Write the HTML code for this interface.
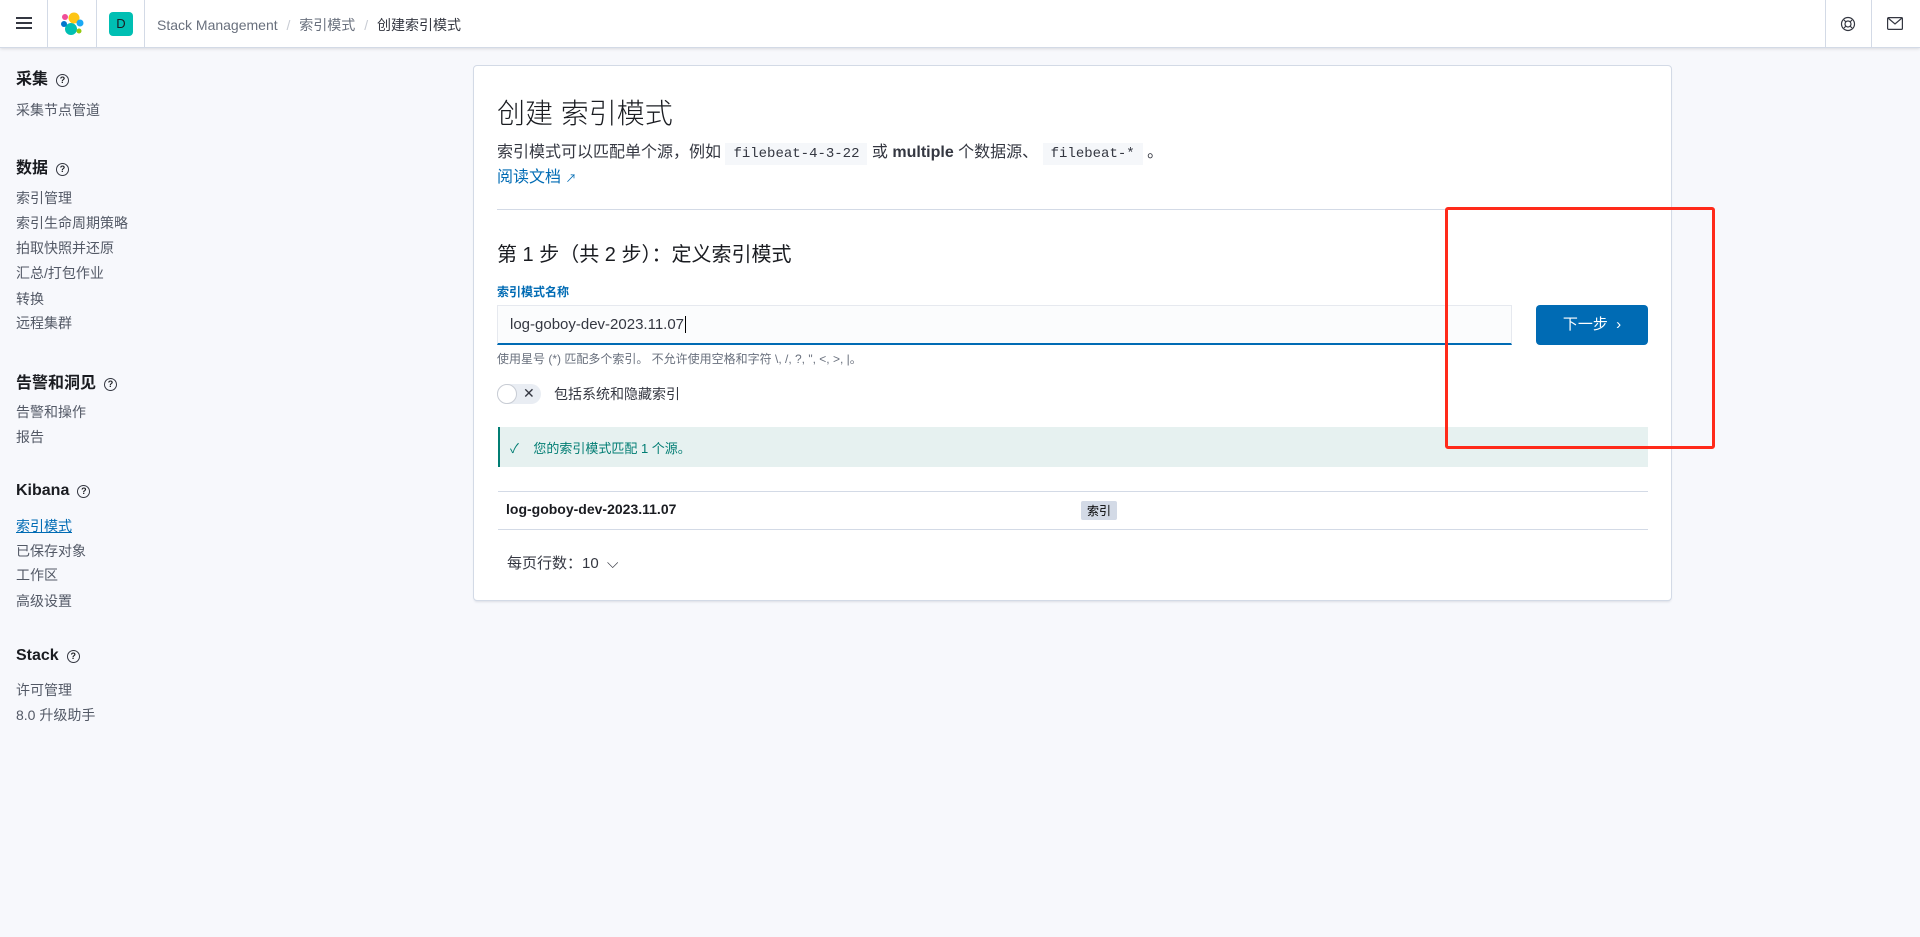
<!DOCTYPE html>
<html><head><meta charset="utf-8"><style>
*{box-sizing:border-box;margin:0;padding:0}
body{width:1920px;height:937px;background:#f7f8fc;font-family:"Liberation Sans","Noto Sans CJK SC",sans-serif;color:#343741;position:relative;overflow:hidden}
.hdr{position:absolute;left:0;top:0;width:1920px;height:48px;background:#fff;border-bottom:1px solid #d3dae6;box-shadow:0 1px 3px rgba(0,0,0,.12)}
.vd{position:absolute;top:0;width:1px;height:48px;background:#d3dae6}
.abs{position:absolute}
.sb h3{position:absolute;left:16px;font-size:16px;font-weight:bold;color:#1a1c21}
.sb h3 span{display:inline-block;width:13px;height:13px;border:1.5px solid #343741;border-radius:50%;font-size:9px;text-align:center;line-height:10px;margin-left:8px;vertical-align:1px;font-weight:bold}
.sb a{position:absolute;left:16px;font-size:14px;color:#535966;text-decoration:none}
.card{position:absolute;left:473px;top:65px;width:1199px;height:536px;background:#fff;border:1px solid #d3dae6;border-radius:4px;box-shadow:0 2px 2px -1px rgba(152,162,179,.3)}
code{font-family:"Liberation Mono",monospace;background:#f5f7fa;padding:3px 8px;font-size:14px;color:#343741}
</style></head><body>
<div class="hdr">
 <div class="abs" style="left:16px;top:17px;width:16px;height:2px;background:#343741;box-shadow:0 5px 0 #343741,0 10px 0 #343741"></div>
 <div class="vd" style="left:47px"></div>
 <svg class="abs" style="left:60px;top:12px" width="24" height="24" viewBox="0 0 24 24"><circle cx="14" cy="6" r="5.5" fill="#fec514"/><circle cx="5" cy="5" r="3" fill="#f04e98"/><circle cx="11" cy="17" r="6" fill="#00bfb3"/><circle cx="20" cy="11" r="3.5" fill="#1ba9f5"/><circle cx="19" cy="19" r="2.5" fill="#93c90e"/><circle cx="4" cy="12" r="3" fill="#0077cc"/></svg>
 <div class="vd" style="left:96px"></div>
 <div class="abs" style="left:109px;top:12px;width:24px;height:24px;background:#00bfb3;border-radius:4px;font-size:13px;text-align:center;line-height:24px;color:#1a1c21">D</div>
 <div class="vd" style="left:144px"></div>
 <div class="abs" style="left:157px;top:15px;font-size:14px;color:#69707d">Stack Management <span style="color:#c8ccd4;margin:0 5px">/</span> 索引模式 <span style="color:#c8ccd4;margin:0 5px">/</span> <span style="color:#343741">创建索引模式</span></div>
 <div class="vd" style="left:1825px"></div>
 <svg class="abs" style="left:1840px;top:16px" width="16" height="16" viewBox="0 0 16 16" fill="none" stroke="#343741" stroke-width="1.2"><circle cx="8" cy="8" r="6.5"/><circle cx="8" cy="8" r="3"/><path d="M4 4l2 2M12 4l-2 2M4 12l2-2M12 12l-2-2"/></svg>
 <div class="vd" style="left:1871px"></div>
 <svg class="abs" style="left:1887px;top:17px" width="16" height="13" viewBox="0 0 16 13" fill="none" stroke="#343741" stroke-width="1.2"><rect x="0.6" y="0.6" width="14.8" height="11.8" rx="1"/><path d="M1 1l7 6 7-6"/></svg>
</div>
<div class="sb">
 <h3 style="top:65px">采集<span>?</span></h3>
 <a style="top:100px">采集节点管道</a>
 <h3 style="top:154px">数据<span>?</span></h3>
 <a style="top:188px">索引管理</a><a style="top:213px">索引生命周期策略</a><a style="top:238px">拍取快照并还原</a><a style="top:263px">汇总/打包作业</a><a style="top:289px">转换</a><a style="top:313px">远程集群</a>
 <h3 style="top:369px">告警和洞见<span>?</span></h3>
 <a style="top:402px">告警和操作</a><a style="top:427px">报告</a>
 <h3 style="top:482px">Kibana<span>?</span></h3>
 <a style="top:516px;color:#006bb4;text-decoration:underline">索引模式</a><a style="top:541px">已保存对象</a><a style="top:565px">工作区</a><a style="top:591px">高级设置</a>
 <h3 style="top:647px">Stack<span>?</span></h3>
 <a style="top:680px">许可管理</a><a style="top:705px">8.0 升级助手</a>
</div>
<div class="card"></div>
<div class="abs" style="left:497px;top:92px;font-size:28px;color:#1a1c21;font-weight:300">创建 索引模式</div>
<div class="abs" style="left:497px;top:138px;font-size:16px;color:#343741">索引模式可以匹配单个源，例如 <code>filebeat-4-3-22</code> 或 <b>multiple</b> 个数据源、 <code>filebeat-*</code> 。</div>
<div class="abs" style="left:497px;top:163px;font-size:16px;color:#006bb4">阅读文档 <span style="font-size:11px">↗</span></div>
<div class="abs" style="left:497px;top:209px;width:1151px;height:1px;background:#d3dae6"></div>
<div class="abs" style="left:497px;top:238px;font-size:20px;color:#1a1c21">第 1 步（共 2 步）：定义索引模式</div>
<div class="abs" style="left:497px;top:283px;font-size:12px;font-weight:bold;color:#006bb4">索引模式名称</div>
<div class="abs" style="left:497px;top:305px;width:1015px;height:40px;background:#fbfcfd;border:1px solid #e6e9ef;border-bottom:2px solid #006bb4;font-size:15px;padding:10px 12px;color:#343741">log-goboy-dev-2023.11.07<span style="border-left:1px solid #000;margin-left:1px"></span></div>
<div class="abs" style="left:1536px;top:305px;width:112px;height:40px;background:#006bb4;border-radius:4px;color:#fff;font-size:15px;text-align:center;line-height:40px">下一步 &nbsp;›</div>
<div class="abs" style="left:497px;top:350px;font-size:12px;color:#69707d">使用星号 (*) 匹配多个索引。 不允许使用空格和字符 \, /, ?, ", &lt;, &gt;, |。</div>
<div class="abs" style="left:497px;top:384px;width:44px;height:20px;background:#e9edf3;border-radius:10px"><div style="width:20px;height:20px;border-radius:50%;background:#fff;border:1px solid #c8ccd4"></div><span style="position:absolute;left:26px;top:1px;font-size:14px;color:#343741">✕</span></div>
<div class="abs" style="left:554px;top:384px;font-size:14px;color:#343741">包括系统和隐藏索引</div>
<div class="abs" style="left:498px;top:427px;width:1150px;height:40px;background:#e6f1f0;border-left:2px solid #017d73;font-size:13px;color:#017d73;padding:11px 0 0 10px">✓&nbsp;&nbsp;&nbsp; 您的索引模式匹配 1 个源。</div>
<div class="abs" style="left:498px;top:491px;width:1150px;height:1px;background:#d3dae6"></div>
<div class="abs" style="left:506px;top:501px;font-size:14px;font-weight:bold;color:#1a1c21">log-goboy-dev-2023.11.07</div>
<div class="abs" style="left:1081px;top:501px;padding:1px 6px;background:#d3dae6;border-radius:2px;font-size:12px;color:#000">索引</div>
<div class="abs" style="left:498px;top:529px;width:1150px;height:1px;background:#d3dae6"></div>
<div class="abs" style="left:507px;top:552px;font-size:15px;color:#343741">每页行数：10 &nbsp;⌵</div>
<div class="abs" style="left:1445px;top:207px;width:270px;height:242px;border:3px solid #ff2a1a;border-radius:3px"></div>
</body></html>
